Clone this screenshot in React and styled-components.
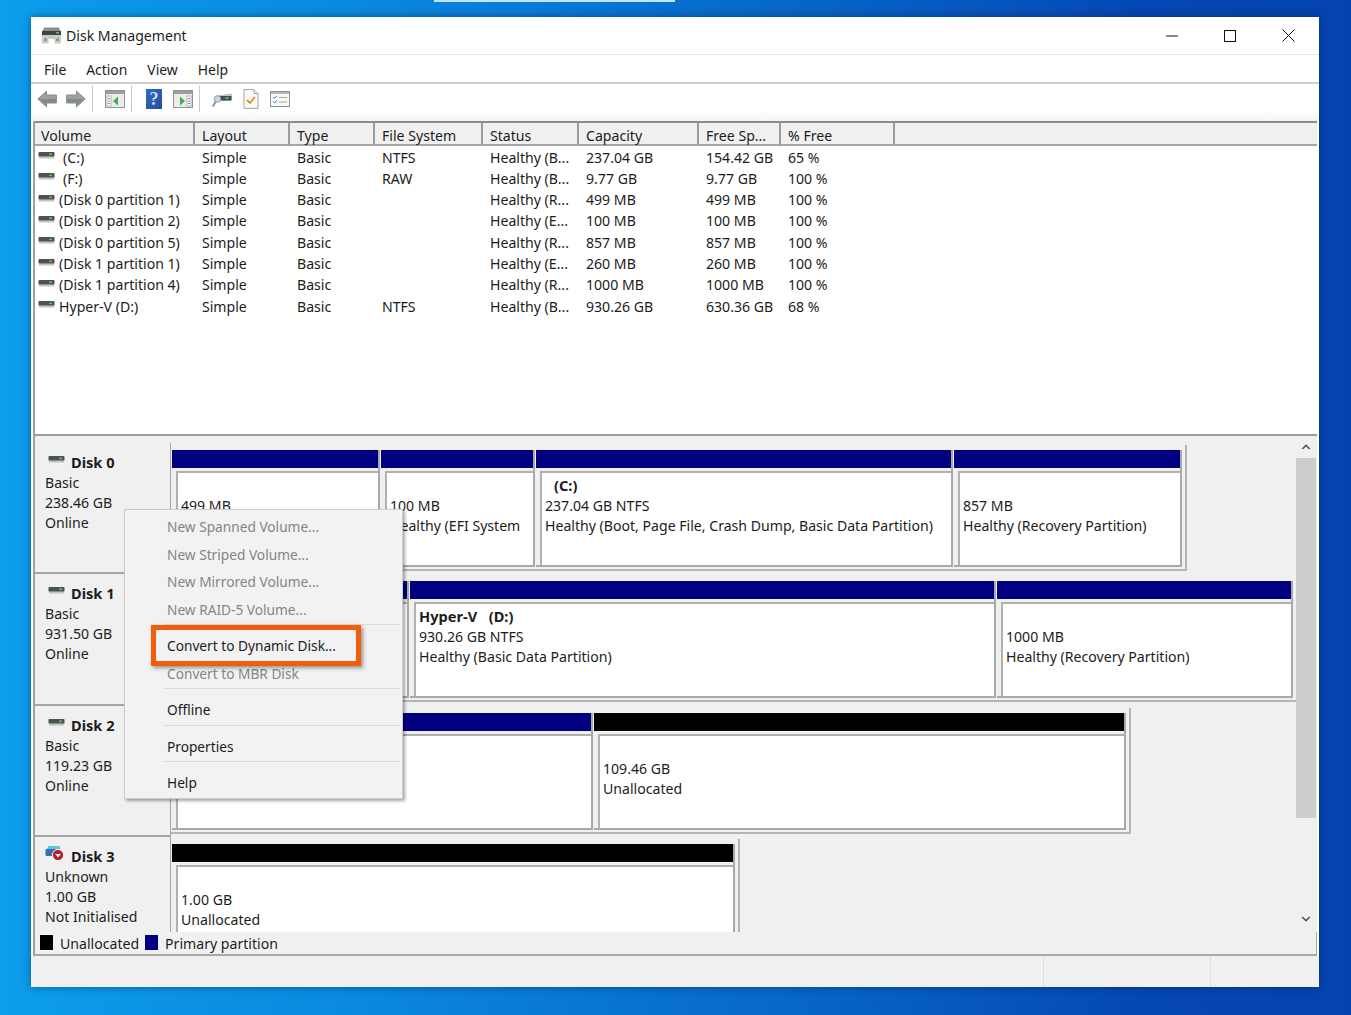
import React from 'react'
import styled, { createGlobalStyle } from 'styled-components'

const GlobalStyle = createGlobalStyle`
  html, body {
    margin: 0;
    padding: 0;
  }
  body {
    font-family: 'Noto Sans', 'Open Sans', sans-serif;
    font-size: 14.1px;
    color: #1c1c1c;
  }
`

const columns = '160px 95px 85px 108px 96px 120px 82px 114px'

const volumes = [
  ['(C:)', 'Simple', 'Basic', 'NTFS', 'Healthy (B...', '237.04 GB', '154.42 GB', '65 %'],
  ['(F:)', 'Simple', 'Basic', 'RAW', 'Healthy (B...', '9.77 GB', '9.77 GB', '100 %'],
  ['(Disk 0 partition 1)', 'Simple', 'Basic', '', 'Healthy (R...', '499 MB', '499 MB', '100 %'],
  ['(Disk 0 partition 2)', 'Simple', 'Basic', '', 'Healthy (E...', '100 MB', '100 MB', '100 %'],
  ['(Disk 0 partition 5)', 'Simple', 'Basic', '', 'Healthy (R...', '857 MB', '857 MB', '100 %'],
  ['(Disk 1 partition 1)', 'Simple', 'Basic', '', 'Healthy (E...', '260 MB', '260 MB', '100 %'],
  ['(Disk 1 partition 4)', 'Simple', 'Basic', '', 'Healthy (R...', '1000 MB', '1000 MB', '100 %'],
  ['Hyper-V (D:)', 'Simple', 'Basic', 'NTFS', 'Healthy (B...', '930.26 GB', '630.36 GB', '68 %'],
]

const headers = ['Volume', 'Layout', 'Type', 'File System', 'Status', 'Capacity', 'Free Sp...', '% Free']

// partitions under the context menu keep no text, only what shows past it
const disks = [
  {
    name: 'Disk 0',
    info: ['Basic', '238.46 GB', 'Online'],
    parts: [
      { width: 206, lines: ['499 MB'] },
      { width: 152, lines: ['100 MB', 'Healthy (EFI System'] },
      { width: 415, title: '(C:)', indent: true, lines: ['237.04 GB NTFS', 'Healthy (Boot, Page File, Crash Dump, Basic Data Partition)'] },
      { width: 226, lines: ['857 MB', 'Healthy (Recovery Partition)'] },
    ],
  },
  {
    name: 'Disk 1',
    info: ['Basic', '931.50 GB', 'Online'],
    parts: [
      { width: 235, lines: [] },
      { width: 584, title: 'Hyper-V  (D:)', lines: ['930.26 GB NTFS', 'Healthy (Basic Data Partition)'] },
      { width: 294, lines: ['1000 MB', 'Healthy (Recovery Partition)'] },
    ],
  },
  {
    name: 'Disk 2',
    info: ['Basic', '119.23 GB', 'Online'],
    parts: [
      { width: 419, lines: [] },
      { width: 530, black: true, lines: ['109.46 GB', 'Unallocated'] },
    ],
  },
  {
    name: 'Disk 3',
    unknown: true,
    info: ['Unknown', '1.00 GB', 'Not Initialised'],
    parts: [{ width: 561, black: true, lines: ['1.00 GB', 'Unallocated'] }],
  },
]

const menuGroups = [
  [
    { label: 'New Spanned Volume...', off: true },
    { label: 'New Striped Volume...', off: true },
    { label: 'New Mirrored Volume...', off: true },
    { label: 'New RAID-5 Volume...', off: true },
  ],
  [{ label: 'Convert to Dynamic Disk...' }, { label: 'Convert to MBR Disk', off: true }],
  [{ label: 'Offline' }],
  [{ label: 'Properties' }],
  [{ label: 'Help' }],
]

const DriveIcon = ({ size = 17 }) => (
  <svg width={size} height={size * 0.6} viewBox="0 0 17 10">
    <rect x="0.5" y="1" width="16" height="4.6" rx="1" fill="#4d524f" />
    <rect x="11" y="2.4" width="3" height="1.6" fill="#55c255" />
    <rect x="1" y="5.6" width="15" height="1.8" fill="#bfc3c1" />
  </svg>
)

const AppIcon = () => (
  <svg width="21" height="19" viewBox="0 0 21 19">
    <path d="M3 1.5h15l2 5H1z" fill="#8b8f8d" />
    <rect x="1" y="5" width="19" height="4" fill="#3f4442" />
    <rect x="15" y="6" width="3" height="1.6" fill="#5cc05c" />
    <path d="M1 9h19v8.5h-6.5V13h-6v4.5H1z" fill="#c9cbc6" />
    <rect x="3.5" y="12.5" width="2" height="2.5" fill="#777" />
    <rect x="15.5" y="12.5" width="2" height="2.5" fill="#777" />
  </svg>
)

const ArrowIcon = ({ flip }) => (
  <svg width="20" height="20" viewBox="0 0 20 20" style={flip ? { transform: 'scaleX(-1)' } : undefined}>
    <path d="M0.8 10 9.5 2.2V6H19.4V14H9.5V17.8Z" fill="#9ba19d" stroke="#858c88" strokeWidth="1" />
    <path d="M3 10H19V13.5H9V16.6Z" fill="#838a86" />
  </svg>
)

const PaneIcon = ({ right }) => (
  <svg width="20" height="18" viewBox="0 0 20 18">
    <rect x="0.5" y="0.5" width="19" height="17" fill="#e9ece8" stroke="#8f9492" />
    <rect x="1" y="1" width="18" height="3" fill="#9a9e9c" />
    <rect x={right ? 14 : 2} y="6" width="4" height="10" fill="#fff" stroke="#9aa0a0" strokeWidth="0.7" />
    <path d={right ? 'M7 6.5v9l5-4.5z' : 'M13 6.5v9l-5-4.5z'} fill="#3cae4a" />
    <path d={right ? 'M15 8.5h2M15 11h2M15 13.5h2' : 'M3 8.5h2M3 11h2M3 13.5h2'} stroke="#667" strokeWidth="0.8" />
  </svg>
)

const ScanIcon = () => (
  <svg width="20" height="20" viewBox="0 0 20 20">
    <path d="M5 6.5 18 4.5 20 5V10.5L5 12z" fill="#c2c6c4" />
    <rect x="5.5" y="7" width="14" height="4.6" fill="#444a48" />
    <rect x="13.5" y="8" width="3" height="2" fill="#58c058" />
    <circle cx="5.5" cy="10" r="3.3" fill="#c6d6e6" stroke="#8f9aa5" />
    <path d="M3.5 12.8.8 17.5" stroke="#8f9491" strokeWidth="2" />
  </svg>
)

const DocIcon = () => (
  <svg width="16" height="20" viewBox="0 0 16 20">
    <path d="M1 .6h10l4 4v14.8H1z" fill="#fbfaf6" stroke="#a4a5a0" />
    <path d="M11 .6v4h4" fill="#e5e5df" stroke="#a4a5a0" />
    <path d="M4 11l3 3 5-6" fill="none" stroke="#e08a2c" strokeWidth="1.8" />
  </svg>
)

const TasksIcon = () => (
  <svg width="20" height="16" viewBox="0 0 20 16">
    <rect x="0.5" y="0.5" width="19" height="15" fill="#f8f9f6" stroke="#8f9492" />
    <rect x="1" y="1" width="18" height="2" fill="#b5b8b6" />
    <path d="M3 6l1.3 1.3L7 5M3 10.5l1.3 1.3L7 9.5" fill="none" stroke="#3a80c4" strokeWidth="1" />
    <path d="M9 6.5h8M9 11h8" stroke="#a5a8a6" strokeWidth="1" />
  </svg>
)

const UnknownDiskIcon = () => (
  <svg width="20" height="17" viewBox="0 0 20 17">
    <rect x="0.5" y="4" width="12" height="7" rx="1" fill="#2f74b5" />
    <path d="M2 4l1.5-3h11l1 3z" fill="#5fc2d8" />
    <circle cx="13" cy="10" r="5.6" fill="#b3202c" stroke="#f4f4f4" strokeWidth="1" />
    <path d="M10.2 9h5.6L13 12.5z" fill="#fff" />
  </svg>
)

const ScrollArrow = ({ down }) => (
  <svg width="10" height="6" viewBox="0 0 10 6">
    <path d={down ? 'M1.2 1 5 4.6 8.8 1' : 'M1.2 5 5 1.4 8.8 5'} fill="none" stroke="#555" strokeWidth="1.6" />
  </svg>
)

const App = () => (
  <>
    <GlobalStyle />
    <Desktop>
      <Window>
        <TitleBar>
          <TitleLeft>
            <AppIcon />
            <span>Disk Management</span>
          </TitleLeft>
          <Controls>
            <Control>
              <svg width="12" height="12" viewBox="0 0 12 12"><path d="M0 6h12" stroke="#111" /></svg>
            </Control>
            <Control>
              <svg width="12" height="12" viewBox="0 0 12 12"><rect x="0.5" y="0.5" width="11" height="11" fill="none" stroke="#111" /></svg>
            </Control>
            <Control>
              <svg width="13" height="13" viewBox="0 0 13 13"><path d="M.5.5l12 12M12.5.5l-12 12" stroke="#111" /></svg>
            </Control>
          </Controls>
        </TitleBar>
        <MenuBar>
          {['File', 'Action', 'View', 'Help'].map(m => (
            <MenuName key={m}>{m}</MenuName>
          ))}
        </MenuBar>
        <Toolbar>
          <ToolGroup>
            <Tool><ArrowIcon /></Tool>
            <Tool><ArrowIcon flip /></Tool>
          </ToolGroup>
          <ToolSep />
          <ToolGroup>
            <Tool><PaneIcon /></Tool>
          </ToolGroup>
          <ToolSep />
          <ToolGroup>
            <Tool><HelpIcon>?</HelpIcon></Tool>
            <Tool><PaneIcon right /></Tool>
          </ToolGroup>
          <ToolSep />
          <ToolGroup>
            <Tool><ScanIcon /></Tool>
            <Tool><DocIcon /></Tool>
            <Tool><TasksIcon /></Tool>
          </ToolGroup>
        </Toolbar>
        <ListPanel>
          <HeaderRow>
            {headers.map(h => (
              <HeaderCell key={h}>{h}</HeaderCell>
            ))}
          </HeaderRow>
          <Rows>
            {volumes.map(row => (
              <Row key={row[0]}>
                <VolumeCell>
                  <VolumeIcon><DriveIcon /></VolumeIcon>
                  <VolumeName $short={row[0].length < 5}>{row[0]}</VolumeName>
                </VolumeCell>
                {row.slice(1).map((cell, i) => (
                  <Cell key={i}>{cell}</Cell>
                ))}
              </Row>
            ))}
          </Rows>
        </ListPanel>
        <DiskArea>
          <DiskScroller>
            {disks.map(disk => (
              <DiskRow key={disk.name}>
                <DiskLabel>
                  <DiskName>
                    <DiskIconBox>{disk.unknown ? <UnknownDiskIcon /> : <DriveIcon />}</DiskIconBox>
                    {disk.name}
                  </DiskName>
                  {disk.info.map(line => (
                    <div key={line}>{line}</div>
                  ))}
                </DiskLabel>
                <PartGroup>
                  {disk.parts.map((part, i) => (
                    <Partition key={i} $width={part.width}>
                      <PartHead $black={part.black} />
                      <PartBody>
                        <PartTitle $indent={part.indent}>{part.title}</PartTitle>
                        {part.lines.map(line => (
                          <PartLine key={line}>{line}</PartLine>
                        ))}
                      </PartBody>
                    </Partition>
                  ))}
                </PartGroup>
              </DiskRow>
            ))}
          </DiskScroller>
          <ScrollBar>
            <ScrollButton><ScrollArrow /></ScrollButton>
            <ScrollTrack>
              <ScrollThumb />
            </ScrollTrack>
            <ScrollButton><ScrollArrow down /></ScrollButton>
          </ScrollBar>
        </DiskArea>
        <Legend>
          <Swatch $color="#000" />
          <LegendText>Unallocated</LegendText>
          <Swatch $color="#000080" />
          <LegendText>Primary partition</LegendText>
        </Legend>
        <StatusBar>
          <StatusCell $grow />
          <StatusCell $width={166} />
          <StatusCell $width={108} />
        </StatusBar>
        <ContextMenu>
          {menuGroups.map((group, i) => (
            <MenuGroup key={i}>
              {group.map(item => (
                <MenuItem key={item.label} $off={item.off}>{item.label}</MenuItem>
              ))}
            </MenuGroup>
          ))}
          <Highlight />
        </ContextMenu>
      </Window>
    </Desktop>
  </>
)

export default App

const Desktop = styled.div`
  position: relative;
  box-sizing: border-box;
  width: 1351px;
  height: 1015px;
  overflow: hidden;
  padding: 17px 32px 28px 31px;
  background: linear-gradient(90deg, #0c9deb 0%, #0a8ae0 25%, #0765c8 60%, #0547b4 85%, #0544b0 100%);
  &::before {
    content: '';
    position: absolute;
    top: 0;
    left: 434px;
    width: 241px;
    height: 2px;
    background: #bfe6fb;
  }
`
const Window = styled.div`
  position: relative;
  display: flex;
  flex-direction: column;
  height: 970px;
  background: #fff;
  box-shadow: 0 0 8px rgba(0, 20, 60, 0.45);
`
const TitleBar = styled.div`
  display: flex;
  align-items: center;
  justify-content: space-between;
  height: 38px;
  box-sizing: border-box;
  border-bottom: 1px solid #e8e8e8;
`
const TitleLeft = styled.div`
  display: flex;
  align-items: center;
  gap: 4px;
  padding-left: 10px;
`
const Controls = styled.div`
  display: flex;
  padding-right: 2px;
`
const Control = styled.div`
  display: flex;
  align-items: center;
  justify-content: center;
  width: 58px;
  height: 37px;
`
const MenuBar = styled.div`
  display: flex;
  align-items: center;
  gap: 20px;
  height: 29px;
  box-sizing: border-box;
  padding-left: 13px;
  font-size: 13.9px;
  border-bottom: 2px solid #cfcfcf;
`
const MenuName = styled.span`
  padding-top: 1px;
`
const Toolbar = styled.div`
  display: flex;
  align-items: center;
  height: 37px;
  box-sizing: border-box;
  padding: 0 0 7px 6px;
  background: linear-gradient(#fff 70%, #f3f3f3);
`
const ToolGroup = styled.div`
  display: flex;
  gap: 9px;
`
const Tool = styled.div`
  display: flex;
  align-items: center;
  justify-content: center;
  width: 20px;
  height: 22px;
`
const ToolSep = styled.div`
  width: 1px;
  height: 26px;
  margin: 0 12px 0 6px;
  background: #c8c8c8;
`
const HelpIcon = styled.div`
  width: 16px;
  height: 20px;
  line-height: 20px;
  text-align: center;
  font-family: 'Liberation Serif', serif;
  font-weight: 700;
  font-size: 18px;
  color: #c9dcf2;
  background: linear-gradient(135deg, #2f6cc0, #234f9c);
`
const ListPanel = styled.div`
  height: 315px;
  margin: 0 2px;
  box-sizing: border-box;
  background: #fff;
  border-left: 2px solid #a0a0a0;
  border-bottom: 2px solid #9c9c9c;
`
const HeaderRow = styled.div`
  display: grid;
  grid-template-columns: ${columns};
  height: 25px;
  box-sizing: border-box;
  border-top: 2px solid #8d8d8d;
  border-bottom: 2px solid #a6a6a6;
  background: #f0f0f0;
`
const HeaderCell = styled.div`
  padding: 3px 0 0 7px;
  line-height: 20px;
  border-right: 2px solid #9c9c9c;
  white-space: nowrap;
  &:first-child {
    padding-left: 6px;
  }
`
const Rows = styled.div`
  padding-top: 0.5px;
`
const Row = styled.div`
  display: grid;
  grid-template-columns: ${columns};
  height: 21.3px;
  line-height: 21.3px;
`
const Cell = styled.div`
  padding-left: 7px;
  white-space: nowrap;
`
const VolumeCell = styled.div`
  display: flex;
  align-items: center;
  padding-left: 3px;
  white-space: nowrap;
`
const VolumeIcon = styled.span`
  display: flex;
  width: 21px;
  height: 12px;
  margin-top: 0;
`
const VolumeName = styled.span`
  margin-left: ${p => (p.$short ? '4px' : '0')};
`
const DiskArea = styled.div`
  display: flex;
  height: 496px;
  margin: 0 2px;
  box-sizing: border-box;
  background: #f0f0f0;
  border-left: 2px solid #a0a0a0;
`
const DiskScroller = styled.div`
  flex: 1;
  height: 100%;
  overflow: hidden;
  padding-top: 7px;
  box-sizing: border-box;
`
const DiskRow = styled.div`
  display: flex;
  align-items: flex-start;
  height: 131.33px;
`
const DiskLabel = styled.div`
  width: 136px;
  height: 100%;
  flex: none;
  box-sizing: border-box;
  padding: 9px 0 0 10px;
  line-height: 20px;
  border-right: 1px solid #a6a6a6;
  border-bottom: 2px solid #a6a6a6;
`
const DiskName = styled.div`
  display: flex;
  align-items: center;
  margin-bottom: 1px;
  font-weight: 700;
  font-size: 14.6px;
`
const DiskIconBox = styled.span`
  display: flex;
  width: 26px;
  justify-content: flex-end;
  padding-right: 6px;
  box-sizing: border-box;
  margin-top: -4px;
`
const PartGroup = styled.div`
  display: flex;
  gap: 1px;
  height: 126px;
  box-sizing: border-box;
  margin-top: 2px;
  padding: 5px 3px 2px 1px;
  border-right: 2px solid #b5b5b5;
  border-bottom: 2px solid #b5b5b5;
`
const Partition = styled.div`
  display: flex;
  flex-direction: column;
  width: ${p => p.$width}px;
  border-right: 2px solid #a9a9a9;
  border-bottom: 2px solid #a9a9a9;
`
const PartHead = styled.div`
  height: 18px;
  flex: none;
  background: ${p => (p.$black ? '#000' : '#000080')};
`
const PartBody = styled.div`
  flex: 1;
  margin: 3px 0 0 4px;
  box-sizing: border-box;
  padding: 2px 0 0 3px;
  line-height: 20px;
  overflow: hidden;
  background: #fff;
  border-top: 2px solid #b0b0b0;
  border-left: 2px solid #b0b0b0;
`
const PartTitle = styled.div`
  height: 21px;
  font-weight: 700;
  font-size: 14.6px;
  word-spacing: 2px;
  white-space: pre;
  margin-left: ${p => (p.$indent ? '9px' : '0')};
`
const PartLine = styled.div`
  white-space: nowrap;
`
const ScrollBar = styled.div`
  display: flex;
  flex-direction: column;
  width: 20px;
  flex: none;
  height: 100%;
  margin-right: 1px;
  padding-bottom: 2px;
  box-sizing: border-box;
`
const ScrollButton = styled.div`
  display: flex;
  align-items: center;
  justify-content: center;
  height: 22px;
  flex: none;
`
const ScrollTrack = styled.div`
  flex: 1;
`
const ScrollThumb = styled.div`
  height: 360px;
  background: #cdcdcd;
`
const Legend = styled.div`
  display: flex;
  align-items: center;
  height: 24px;
  margin: 0 2px;
  box-sizing: border-box;
  padding-left: 5px;
  background: #f1f1f1;
  border-left: 2px solid #a0a0a0;
  border-right: 1px solid #a8a8a8;
  border-bottom: 2px solid #a8a8a8;
`
const Swatch = styled.span`
  width: 13px;
  height: 15px;
  margin-top: -2px;
  background: ${p => p.$color};
`
const LegendText = styled.span`
  margin: 0 6px 0 7px;
`
const StatusBar = styled.div`
  display: flex;
  flex: 1;
  background: #f0f0f0;
`
const StatusCell = styled.div`
  flex: ${p => (p.$grow ? 1 : 'none')};
  width: ${p => (p.$width ? `${p.$width}px` : 'auto')};
  border-right: 1px solid #dedede;
  &:last-child {
    border-right: none;
  }
`
const ContextMenu = styled.div`
  position: absolute;
  left: 93px;
  top: 492px;
  width: 279px;
  height: 290px;
  box-sizing: border-box;
  padding-top: 3px;
  font-size: 13.7px;
  background: #f2f2f2;
  border: 1px solid #cdcdcd;
  box-shadow: 2px 2px 3px rgba(0, 0, 0, 0.35);
`
const MenuGroup = styled.div`
  & + &::before {
    content: '';
    display: block;
    height: 1px;
    margin: 1px 2px 7px 38px;
    background: #dcdcdc;
  }
`
const MenuItem = styled.div`
  height: 27.5px;
  line-height: 27.5px;
  padding-left: 42px;
  color: ${p => (p.$off ? '#858585' : '#1c1c1c')};
`
const Highlight = styled.div`
  position: absolute;
  left: 26px;
  top: 115px;
  width: 210px;
  height: 41px;
  box-sizing: border-box;
  border: 5px solid #f25c0a;
  box-shadow: 2px 2px 4px rgba(0, 0, 0, 0.4);
`
